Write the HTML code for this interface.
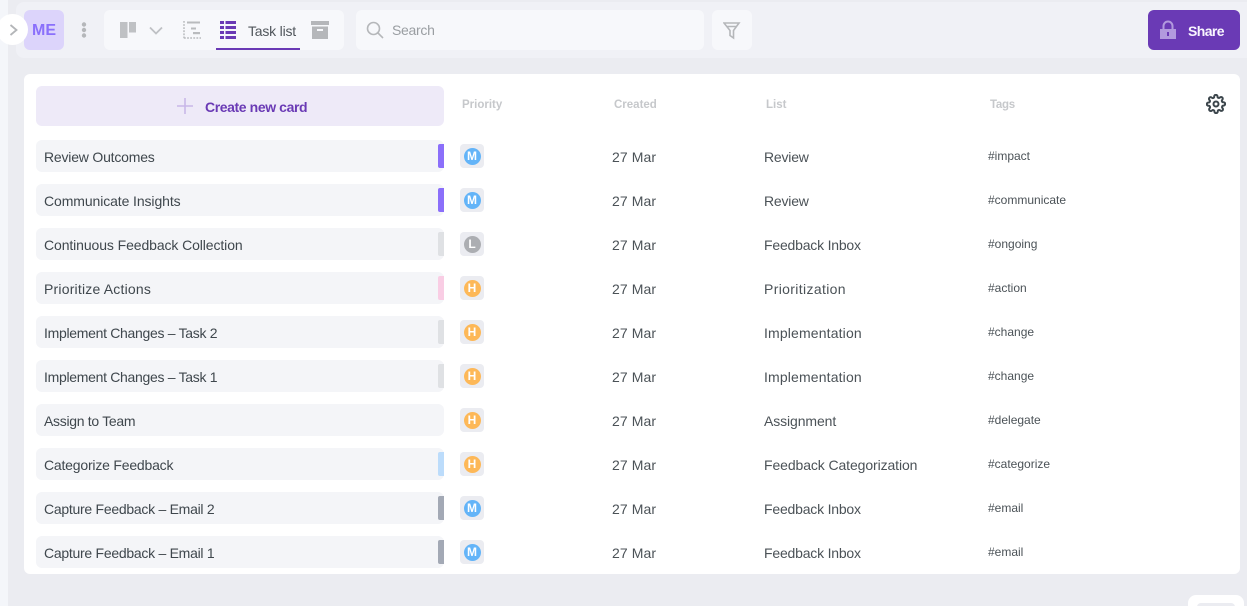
<!DOCTYPE html>
<html><head><meta charset="utf-8">
<style>
*{box-sizing:border-box;margin:0;padding:0}
html,body{width:1247px;height:606px;overflow:hidden;background:#ebecf1;font-family:"Liberation Sans",sans-serif;position:relative}
div.t,span.t{position:absolute;white-space:nowrap;line-height:16px}
.name{left:36px;width:408px;height:32px;background:#f4f5f8;border-radius:6px;font-size:14px;color:#3f474d;line-height:34px;padding-left:8px;white-space:nowrap;position:absolute;letter-spacing:-.2px}
.bar{position:absolute;left:438px;width:6px;height:24px;border-radius:2px 0 0 2px}
.chip{position:absolute;left:460px;width:24px;height:24px;background:#ebecf1;border-radius:4px}
.dot{position:absolute;left:3.5px;top:3.5px;width:17px;height:17px;border-radius:50%;color:#fff;font-size:12px;font-weight:bold;line-height:17px;text-align:center}
.m{background:#63b4f8}.l{background:#acaeb2}.h{background:#fdb858}
.d,.li{position:absolute;font-size:14px;color:#4b5257;white-space:nowrap;line-height:18px}
.d{left:612px;letter-spacing:.1px}.li{left:764px;letter-spacing:-.2px}
.tag{position:absolute;left:988px;font-size:12px;color:#4b5257;white-space:nowrap;line-height:14px;top:0}
.hd{position:absolute;top:97px;font-size:11.5px;font-weight:bold;color:#c6c8cb;line-height:14px}
</style></head><body>
<div style="position:absolute;left:0;top:0;width:8px;height:606px;background:#f4f6fa"></div>
<div style="position:absolute;left:16px;top:2px;width:1231px;height:56px;background:#f0f1f6;border-radius:8px 0 0 8px"></div>

<div style="position:absolute;left:24px;top:10px;width:40px;height:40px;background:#dcd4fb;border-radius:6px;color:#8a70fb;font-size:16px;font-weight:bold;line-height:41px;text-align:center">ME</div>
<div style="position:absolute;left:-3px;top:14px;width:31px;height:31px;border-radius:50%;background:#fff"></div>
<svg style="position:absolute;left:8px;top:23px" width="12" height="14" viewBox="0 0 12 14"><path d="M2.500 2l6 5-6 5" fill="none" stroke="#b3b5b8" stroke-width="1.800"/></svg>
<svg style="position:absolute;left:80px;top:21px" width="8" height="18"><circle cx="4" cy="3.500" r="2.200" fill="#b5b7ba"/><circle cx="4" cy="9" r="2.200" fill="#b5b7ba"/><circle cx="4" cy="14.500" r="2.200" fill="#b5b7ba"/></svg>

<div style="position:absolute;left:104px;top:10px;width:240px;height:40px;background:#f7f8fb;border-radius:6px"></div>
<svg style="position:absolute;left:120px;top:22px" width="17" height="16"><rect width="7.500" height="16" fill="#bfc1c4"/><rect x="9" width="7" height="10.500" fill="#bfc1c4"/></svg>
<svg style="position:absolute;left:149px;top:26px" width="14" height="9"><path d="M1 1.500l6 6 6-6" fill="none" stroke="#bfc1c4" stroke-width="1.800"/></svg>
<svg style="position:absolute;left:183px;top:21px" width="18" height="18" fill="none"><path d="M1 0v18M1 17h17" stroke="#b9bbbe" stroke-width="1.500" stroke-dasharray="1.800 1.300"/><rect x="4" y="0.500" width="13" height="2" fill="#b9bbbe"/><rect x="8" y="6.500" width="5" height="2" fill="#b9bbbe"/><rect x="10" y="11" width="7" height="2.200" fill="#b9bbbe"/></svg>
<svg style="position:absolute;left:220px;top:21px" width="16" height="18" fill="#6a3ab5"><rect width="4" height="3"/><rect x="5.500" width="10.500" height="3"/><rect y="5" width="4" height="3"/><rect x="5.500" y="5" width="10.500" height="3"/><rect y="10" width="4" height="3"/><rect x="5.500" y="10" width="10.500" height="3"/><rect y="15" width="4" height="3"/><rect x="5.500" y="15" width="10.500" height="3"/></svg>
<div class="t" style="left:248px;top:23px;font-size:14px;color:#50565b;letter-spacing:-.2px">Task list</div>
<div style="position:absolute;left:216px;top:48px;width:84px;height:2px;background:#6a3ab5"></div>
<svg style="position:absolute;left:311px;top:21px" width="18" height="18" fill="#b5b7ba"><path d="M0 0h18v4H0z"/><path d="M1 5.500h16V18H1zM6 8v2h6V8z" fill-rule="evenodd"/></svg>

<div style="position:absolute;left:356px;top:10px;width:348px;height:40px;background:#f7f8fb;border-radius:6px"></div>
<svg style="position:absolute;left:366px;top:21px" width="18" height="18" fill="none" stroke="#b5b7ba" stroke-width="1.600"><circle cx="7.500" cy="7.500" r="6"/><path d="M12 12l5 5"/></svg>
<div class="t" style="left:392px;top:22px;font-size:14px;color:#9a9ea2;letter-spacing:-.3px">Search</div>
<div style="position:absolute;left:712px;top:10px;width:40px;height:40px;background:#f7f8fb;border-radius:6px"></div>
<svg style="position:absolute;left:723px;top:21px" width="18" height="19" fill="none" stroke="#b5b7ba" stroke-width="1.600"><path d="M1 2h15l-5.500 7.500V17l-3.500-2.500V9.500zM4 5.500h9"/></svg>

<div style="position:absolute;left:1148px;top:10px;width:92px;height:40px;background:#6a3ab5;border-radius:6px"></div>
<svg style="position:absolute;left:1159px;top:20px" width="18" height="20"><path d="M4.500 9V6a4.500 4.500 0 0 1 9 0v3" fill="none" stroke="#b29ade" stroke-width="2"/><rect x="1" y="9" width="16" height="10" fill="#b29ade"/><rect x="8" y="12" width="2" height="4" fill="#6a3ab5"/></svg>
<div class="t" style="left:1188px;top:23px;font-size:14px;font-weight:bold;color:#f8f5fe;letter-spacing:-.6px">Share</div>

<div style="position:absolute;left:24px;top:74px;width:1216px;height:500px;background:#fff;border-radius:6px"></div>
<div style="position:absolute;left:36px;top:86px;width:408px;height:40px;background:#eeeaf8;border-radius:6px"></div>
<svg style="position:absolute;left:177px;top:98px" width="16" height="16"><path d="M8 0v16M0 8h16" stroke="#c8b8e8" stroke-width="1.600"/></svg>
<div class="t" style="left:205px;top:99px;font-size:14px;font-weight:bold;color:#6a3ab5;letter-spacing:-.4px">Create new card</div>

<div class="hd" style="left:462px;top:98px">Priority</div>
<div class="hd" style="left:614px;top:98px">Created</div>
<div class="hd" style="left:766px;top:98px">List</div>
<div class="hd" style="left:990px;top:98px;letter-spacing:-.3px">Tags</div>
<svg style="position:absolute;left:1206px;top:94px" width="20" height="20" viewBox="0 0 24 24" fill="none" stroke="#3c464c" stroke-width="2.400" stroke-linejoin="round"><circle cx="12" cy="12" r="3"/><path d="M19.400 15a1.650 1.650 0 0 0 .33 1.820l.06.06a2 2 0 1 1-2.830 2.830l-.06-.06a1.650 1.650 0 0 0-2.800 1.170V21a2 2 0 1 1-4 0v-.09a1.650 1.650 0 0 0-2.880-1.110l-.06.06a2 2 0 1 1-2.830-2.830l.06-.06a1.650 1.650 0 0 0-1.170-2.800H3a2 2 0 1 1 0-4h.09A1.650 1.650 0 0 0 4.200 7.290l-.06-.06a2 2 0 1 1 2.830-2.830l.06.06a1.650 1.650 0 0 0 2.800-1.170V3a2 2 0 1 1 4 0v.09a1.650 1.650 0 0 0 2.800 1.170l.06-.06a2 2 0 1 1 2.830 2.830l-.06.06a1.650 1.650 0 0 0 1.170 2.800H21a2 2 0 1 1 0 4h-.09a1.650 1.650 0 0 0-1.510 1.110z"/></svg>

<div class="name" style="top:140px">Review Outcomes</div><div class="bar" style="top:144px;background:#8b6ffa"></div><div class="chip" style="top:144px"><div class="dot m">M</div></div><div class="d" style="top:148px">27 Mar</div><div class="li" style="top:148px">Review</div><div class="tag" style="top:149px">#impact</div>
<div class="name" style="top:184px;letter-spacing:-.1px">Communicate Insights</div><div class="bar" style="top:188px;background:#8b6ffa"></div><div class="chip" style="top:188px"><div class="dot m">M</div></div><div class="d" style="top:192px">27 Mar</div><div class="li" style="top:192px">Review</div><div class="tag" style="top:193px">#communicate</div>
<div class="name" style="top:228px;letter-spacing:-.1px">Continuous Feedback Collection</div><div class="bar" style="top:232px;background:#dfe1e4"></div><div class="chip" style="top:232px"><div class="dot l">L</div></div><div class="d" style="top:236px">27 Mar</div><div class="li" style="top:236px">Feedback Inbox</div><div class="tag" style="top:237px">#ongoing</div>
<div class="name" style="top:272px;letter-spacing:.2px">Prioritize Actions</div><div class="bar" style="top:276px;background:#f9cde4"></div><div class="chip" style="top:276px"><div class="dot h">H</div></div><div class="d" style="top:280px">27 Mar</div><div class="li" style="top:280px;letter-spacing:.35px">Prioritization</div><div class="tag" style="top:281px">#action</div>
<div class="name" style="top:316px;letter-spacing:-.3px">Implement Changes – Task 2</div><div class="bar" style="top:320px;background:#dfe1e4"></div><div class="chip" style="top:320px"><div class="dot h">H</div></div><div class="d" style="top:324px">27 Mar</div><div class="li" style="top:324px;letter-spacing:.15px">Implementation</div><div class="tag" style="top:325px">#change</div>
<div class="name" style="top:360px;letter-spacing:-.3px">Implement Changes – Task 1</div><div class="bar" style="top:364px;background:#dfe1e4"></div><div class="chip" style="top:364px"><div class="dot h">H</div></div><div class="d" style="top:368px">27 Mar</div><div class="li" style="top:368px;letter-spacing:.15px">Implementation</div><div class="tag" style="top:369px">#change</div>
<div class="name" style="top:404px;letter-spacing:-.3px">Assign to Team</div><div class="chip" style="top:408px"><div class="dot h">H</div></div><div class="d" style="top:412px">27 Mar</div><div class="li" style="top:412px;letter-spacing:-.1px">Assignment</div><div class="tag" style="top:413px">#delegate</div>
<div class="name" style="top:448px">Categorize Feedback</div><div class="bar" style="top:452px;background:#bcdcfb"></div><div class="chip" style="top:452px"><div class="dot h">H</div></div><div class="d" style="top:456px">27 Mar</div><div class="li" style="top:456px;letter-spacing:-.1px">Feedback Categorization</div><div class="tag" style="top:457px">#categorize</div>
<div class="name" style="top:492px;letter-spacing:-.27px">Capture Feedback – Email 2</div><div class="bar" style="top:496px;background:#a3a9b5"></div><div class="chip" style="top:496px"><div class="dot m">M</div></div><div class="d" style="top:500px">27 Mar</div><div class="li" style="top:500px">Feedback Inbox</div><div class="tag" style="top:501px">#email</div>
<div class="name" style="top:536px;letter-spacing:-.27px">Capture Feedback – Email 1</div><div class="bar" style="top:540px;background:#a3a9b5"></div><div class="chip" style="top:540px"><div class="dot m">M</div></div><div class="d" style="top:544px">27 Mar</div><div class="li" style="top:544px">Feedback Inbox</div><div class="tag" style="top:545px">#email</div>

<div style="position:absolute;left:1188px;top:595px;width:56px;height:20px;background:#fff;border-radius:8px"></div>
<div style="position:absolute;left:1197px;top:603px;width:38px;height:10px;background:#ebecf1;border-radius:4px"></div>
</body></html>
